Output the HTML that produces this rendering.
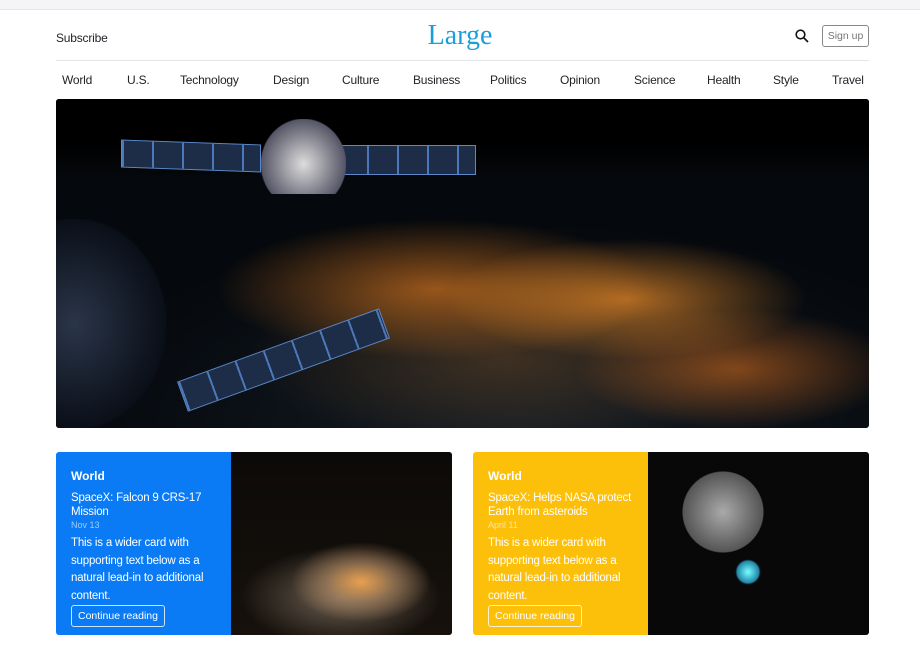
<!DOCTYPE html>
<html><head><meta charset="utf-8"><style>
*{margin:0;padding:0;box-sizing:border-box}
body{width:920px;height:650px;background:#fff;font-family:"Liberation Sans","DejaVu Sans",sans-serif;color:#212529;position:relative;overflow:hidden}
.top{position:absolute;left:0;top:0;width:920px;height:10px;background:#f5f5f7;border-bottom:1px solid #e6e6e6}
.sub{position:absolute;left:56px;top:31px;font-size:12px;letter-spacing:-.2px}
.logo{position:absolute;left:0;width:920px;top:20px;text-align:center;font-family:"Liberation Serif",serif;font-size:28px;color:#1a9fdb}
.signup{position:absolute;left:822px;top:25px;width:47px;height:22px;border:1px solid #888;border-radius:3px;font-size:10.5px;color:#777;text-align:center;line-height:20px}
.search{position:absolute;left:795px;top:29px}
.line{position:absolute;left:56px;top:60px;width:813px;height:1px;background:#e5e5e5}
.nav{position:absolute;left:62px;top:73px;font-size:12px;letter-spacing:-.2px}
.nav span{position:absolute;white-space:nowrap}
.hero{position:absolute;left:56px;top:99px;width:813px;height:329px;border-radius:3px;overflow:hidden;background:
radial-gradient(ellipse 180px 60px at 570px 200px,rgba(255,150,40,.65),transparent),
radial-gradient(ellipse 220px 70px at 380px 190px,rgba(240,130,30,.6),transparent),
radial-gradient(ellipse 160px 60px at 680px 270px,rgba(240,120,30,.5),transparent),
radial-gradient(ellipse 260px 90px at 450px 260px,rgba(120,80,40,.45),transparent),
radial-gradient(ellipse 600px 260px at 470px 330px,#141c24,#05080c 80%),#020305}
.hero .sky{position:absolute;left:0;top:0;width:813px;height:80px;background:linear-gradient(#000,#000 55%,rgba(0,0,0,0))}
.panel{position:absolute;background:repeating-linear-gradient(90deg,#4a78b8 0 2px,#1d2d48 2px 30px);border:1px solid #5a88c8}
.card{position:absolute;top:452px;width:396px;height:183px;border-radius:3px;overflow:hidden;color:#fff}
.card .txt{position:absolute;left:15px;top:17px;width:150px}
.card h4{font-size:12px;font-weight:bold;margin-bottom:8px}
.card .t{font-size:11.5px;line-height:14px;letter-spacing:-.2px}
.card .d{font-size:9px;opacity:.6;margin:1px 0 5px}
.card p{font-size:11.5px;line-height:17.5px;letter-spacing:-.2px}
.card .btn{display:inline-block;border:1px solid rgba(255,255,255,.8);border-radius:3px;font-size:10.5px;padding:4px 6px;margin-top:0}
.img{position:absolute;top:0;height:183px}
</style></head><body>
<div class="top"></div>
<div class="sub">Subscribe</div>
<div class="logo">Large</div>
<svg class="search" width="14" height="14" viewBox="0 0 14 14"><circle cx="5.5" cy="5.5" r="4.3" fill="none" stroke="#111" stroke-width="1.6"/><line x1="8.7" y1="8.7" x2="13" y2="13" stroke="#111" stroke-width="1.7"/></svg>
<div class="signup">Sign up</div>
<div class="line"></div>
<div class="nav">
<span style="left:0">World</span><span style="left:65px">U.S.</span><span style="left:118px">Technology</span><span style="left:211px">Design</span><span style="left:280px">Culture</span><span style="left:351px">Business</span><span style="left:428px">Politics</span><span style="left:498px">Opinion</span><span style="left:572px">Science</span><span style="left:645px">Health</span><span style="left:711px">Style</span><span style="left:770px">Travel</span>
</div>
<div class="hero"><div class="sky"></div>
<div class="panel" style="left:65px;top:43px;width:140px;height:28px;transform:skewY(2deg)"></div>
<div class="panel" style="left:280px;top:46px;width:140px;height:30px"></div>
<div class="panel" style="left:120px;top:245px;width:215px;height:32px;transform:rotate(-20deg)"></div>
<div style="position:absolute;left:205px;top:20px;width:85px;height:75px;background:radial-gradient(ellipse at 50% 60%,#ddd,#556 70%,transparent 72%)"></div>
<div style="position:absolute;left:-20px;top:120px;width:130px;height:210px;background:radial-gradient(ellipse at 30% 50%,#2a3548,#0a0f18 70%,transparent 72%)"></div>
</div>
<div class="card" style="left:56px;background:#0a7bf5">
<div class="txt"><h4>World</h4><div class="t">SpaceX: Falcon 9 CRS-17 Mission</div><div class="d">Nov 13</div><p>This is a wider card with supporting text below as a natural lead-in to additional content.</p><span class="btn">Continue reading</span></div>
<div class="img" style="left:175px;width:221px;background:radial-gradient(ellipse 70px 40px at 130px 130px,#e8a050,rgba(180,140,100,.6) 50%,transparent),radial-gradient(ellipse 100px 50px at 110px 145px,rgba(170,150,130,.6),transparent),linear-gradient(#0c0a08,#16110c)"></div>
</div>
<div class="card" style="left:473px;background:#fcbf0a">
<div class="txt"><h4>World</h4><div class="t">SpaceX: Helps NASA protect Earth from asteroids</div><div class="d">April 11</div><p>This is a wider card with supporting text below as a natural lead-in to additional content.</p><span class="btn">Continue reading</span></div>
<div class="img" style="left:175px;width:221px;background:radial-gradient(circle 50px at 75px 60px,#aaa,#555 80%,transparent 82%),radial-gradient(circle 18px at 100px 120px,#7ff,#28a 60%,transparent 70%),#080808"></div>
</div>
</body></html>
